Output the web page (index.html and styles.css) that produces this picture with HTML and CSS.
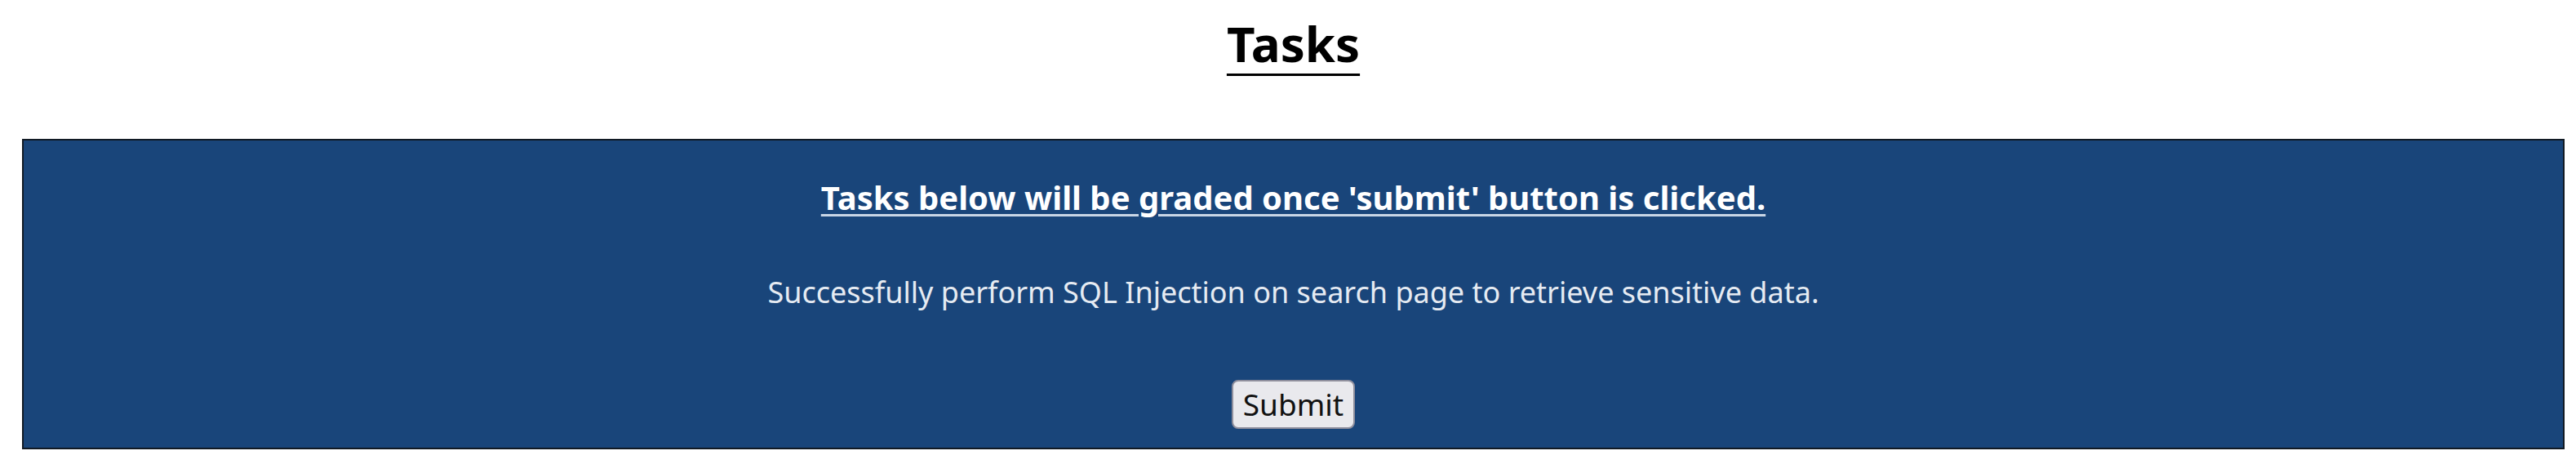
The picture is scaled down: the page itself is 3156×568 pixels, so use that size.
FILE: index.html
```html
<!DOCTYPE html>
<html>
<head>
<meta charset="utf-8">
<title>Tasks</title>
<link rel="stylesheet" href="styles.css">
</head>
<body>
<div class="page">
  <h1 class="title">Tasks</h1>
  <section class="task-box">
    <h2 class="task-heading">Tasks below will be graded once 'submit' button is clicked.</h2>
    <p class="task-text">Successfully perform SQL Injection on search page to retrieve sensitive data.</p>
    <button class="submit-btn" type="button">Submit</button>
  </section>
</div>
</body>
</html>
```

FILE: styles.css
```css
html, body {
  margin: 0;
  padding: 0;
  background: #ffffff;
}

body {
  font-family: "Noto Sans", "Open Sans", sans-serif;
}

.page {
  margin: 0 14px 0 27px;
  padding-top: 12px;
}

.title {
  margin: 0;
  text-align: center;
  font-size: 60px;
  font-weight: 700;
  line-height: normal;
  text-decoration: underline;
  text-underline-offset: 14px;
  text-decoration-thickness: 3px;
  color: #000;
}

.task-box {
  margin-top: 76px;
  background: #19457a;
  border: 2px solid #111a24;
  display: flex;
  flex-direction: column;
  align-items: center;
  padding: 42px 20px 23px;
}

.task-heading {
  margin: 0;
  font-size: 40px;
  font-weight: 700;
  line-height: normal;
  color: #ffffff;
  text-decoration: underline;
  text-decoration-color: #c9d6e6;
  text-decoration-thickness: 3px;
  text-underline-offset: 5px;
}

.task-text {
  margin: 64px 0 0;
  font-size: 36px;
  line-height: normal;
  color: #e6ebf2;
}

.submit-btn {
  margin-top: 83px;
  font-family: "Noto Sans", sans-serif;
  font-size: 37px;
  line-height: 1.35;
  color: #111;
  background: #e9e9ed;
  border: 2px solid #8f8f9d;
  border-radius: 8px;
  padding: 3px 12px;
}
```
